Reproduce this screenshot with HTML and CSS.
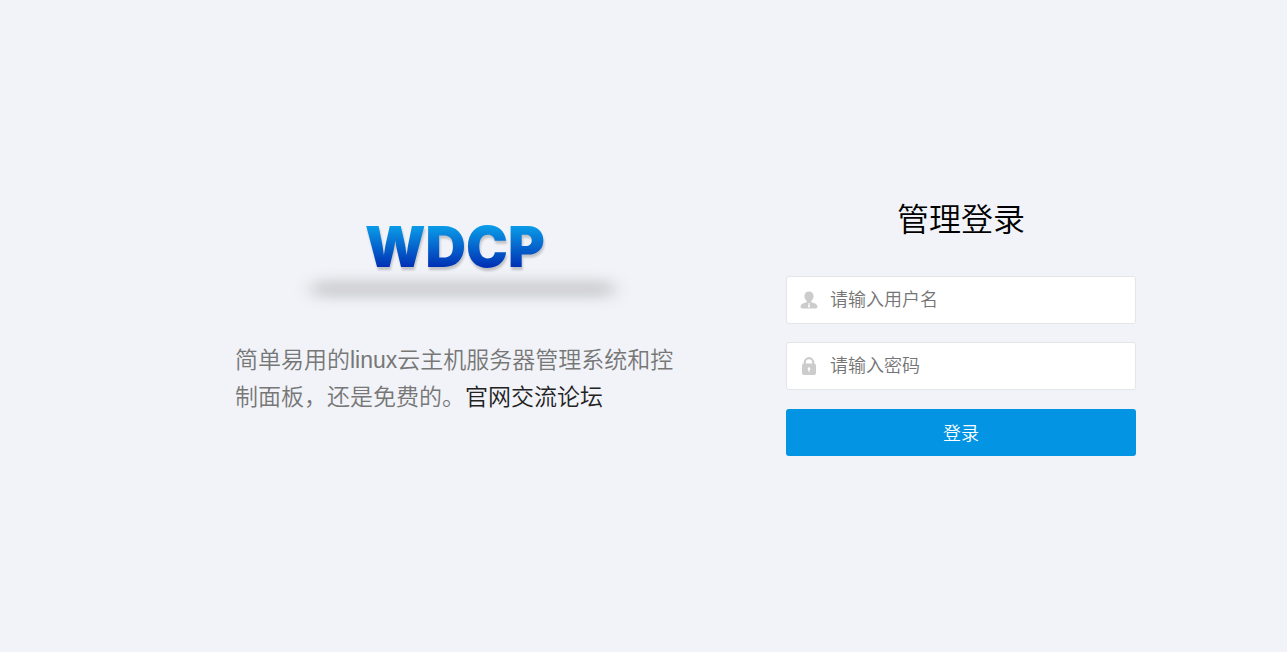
FILE: index.html
```html
<!DOCTYPE html>
<html lang="zh-CN">
<head>
<meta charset="utf-8">
<meta name="viewport" content="width=device-width, initial-scale=1">
<title>管理登录</title>
<link rel="stylesheet" href="styles.css">
</head>
<body>
<main class="login">
  <section class="intro">
    <svg class="logo" viewBox="0 0 340 100" role="img" aria-label="WDCP">
      <defs>
        <linearGradient id="ink" gradientUnits="userSpaceOnUse" x1="0" y1="16" x2="0" y2="57">
          <stop offset="0" stop-color="#0a9ce8"/>
          <stop offset="1" stop-color="#0030b4"/>
        </linearGradient>
        <filter id="soft" filterUnits="userSpaceOnUse" x="-20" y="40" width="380" height="80" color-interpolation-filters="sRGB">
          <feGaussianBlur stdDeviation="9 6"/>
        </filter>
        <filter id="drop" x="-5%" y="-10%" width="115%" height="130%" color-interpolation-filters="sRGB">
          <feDropShadow dx="1" dy="3" stdDeviation="1" flood-color="#000" flood-opacity="0.2"/>
        </filter>
      </defs>
      <rect x="22" y="70" width="302" height="18" rx="8" fill="#d0d0d4" filter="url(#soft)"/>
      <text class="logo-text" x="75" y="57" fill="url(#ink)" filter="url(#drop)">WDCP</text>
    </svg>
    <p class="about">简单易用的linux云主机服务器管理系统和控制面板，还是免费的。<a class="forum" href="#">官网交流论坛</a></p>
  </section>
  <form class="panel">
    <h1 class="title">管理登录</h1>
    <label class="field">
      <svg class="icon" viewBox="0 0 18 18" aria-hidden="true">
        <path fill="#ccc" d="M9 0.5C6.3.5 4.400 2.400 4.400 5c0 2 .9 3.800 2.300 4.900v1.300C4 12 1 12.600.6 15.300c-.2 1.500.6 2.200 2 2.200h12.800c1.400 0 2.200-.7 2-2.200C17 12.600 14 12 11.300 11.200V9.900c1.400-1.100 2.300-2.900 2.300-4.900C13.600 2.400 11.700.5 9 .5z"/>
        <path fill="#fff" d="M8.200 12.300h1.600l-.3 1.200.5 2.300-1 .9-1-.9.5-2.300z"/>
      </svg>
      <input class="input" type="text" name="username" placeholder="请输入用户名" aria-label="用户名">
    </label>
    <label class="field">
      <svg class="icon" viewBox="0 0 18 18" aria-hidden="true">
        <path fill="none" stroke="#ccc" stroke-width="2.200" d="M4.800 8V5.400a4.200 4.200 0 0 1 8.400 0V8"/>
        <rect x="2" y="6.500" width="14" height="11.500" rx="2" fill="#ccc"/>
        <path fill="#fff" d="M9 10.300a1.400 1.400 0 0 1 .6 2.600v1.800H8.400v-1.800A1.400 1.400 0 0 1 9 10.300z"/>
      </svg>
      <input class="input" type="password" name="password" placeholder="请输入密码" aria-label="密码">
    </label>
    <button class="submit" type="submit">登录</button>
  </form>
</main>
</body>
</html>
```
FILE: styles.css
```css
* {
  box-sizing: border-box;
}

body {
  margin: 0;
  background: #f1f3f8;
  color: #000;
  font-family: "Liberation Sans", "Noto Sans CJK SC", sans-serif;
  font-weight: 350;
}

.login {
  display: flex;
  justify-content: center;
  gap: 110px;
  padding: 196px 0 40px 84px;
}

.intro {
  flex: 0 1 441px;
  padding-top: 14px;
}

.logo {
  display: block;
  width: 340px;
  max-width: 100%;
  margin-left: 55px;
  overflow: visible;
}

.logo-text {
  font-family: Inter, "Liberation Sans", sans-serif;
  font-size: 56px;
  font-weight: 900;
}

.about {
  margin: 32px 0 0;
  color: #777;
  font-size: 23px;
  line-height: 37px;
}

.forum {
  color: #222;
  text-decoration: none;
}

.panel {
  flex: 0 0 350px;
  display: flex;
  flex-direction: column;
  gap: 18px;
}

.title {
  margin: 0 0 14px;
  font-size: 32px;
  font-weight: 350;
  line-height: 48px;
  text-align: center;
}

.field {
  display: flex;
  align-items: center;
  gap: 12px;
  height: 48px;
  padding: 0 13px;
  border: 1px solid #e4e5e8;
  border-radius: 3px;
  background: #fff;
}

.icon {
  flex: none;
  width: 18px;
  height: 18px;
}

.input {
  flex: 1;
  min-width: 0;
  padding: 0;
  border: 0;
  outline: 0;
  background: none;
  font: inherit;
  font-size: 18px;
}

.input::placeholder {
  color: #757575;
}

.submit {
  height: 47px;
  margin-top: 1px;
  padding: 0 0 2px;
  border: 0;
  border-radius: 3px;
  background: #0395e4;
  color: #fff;
  font: inherit;
  font-size: 18px;
  cursor: pointer;
}
```
